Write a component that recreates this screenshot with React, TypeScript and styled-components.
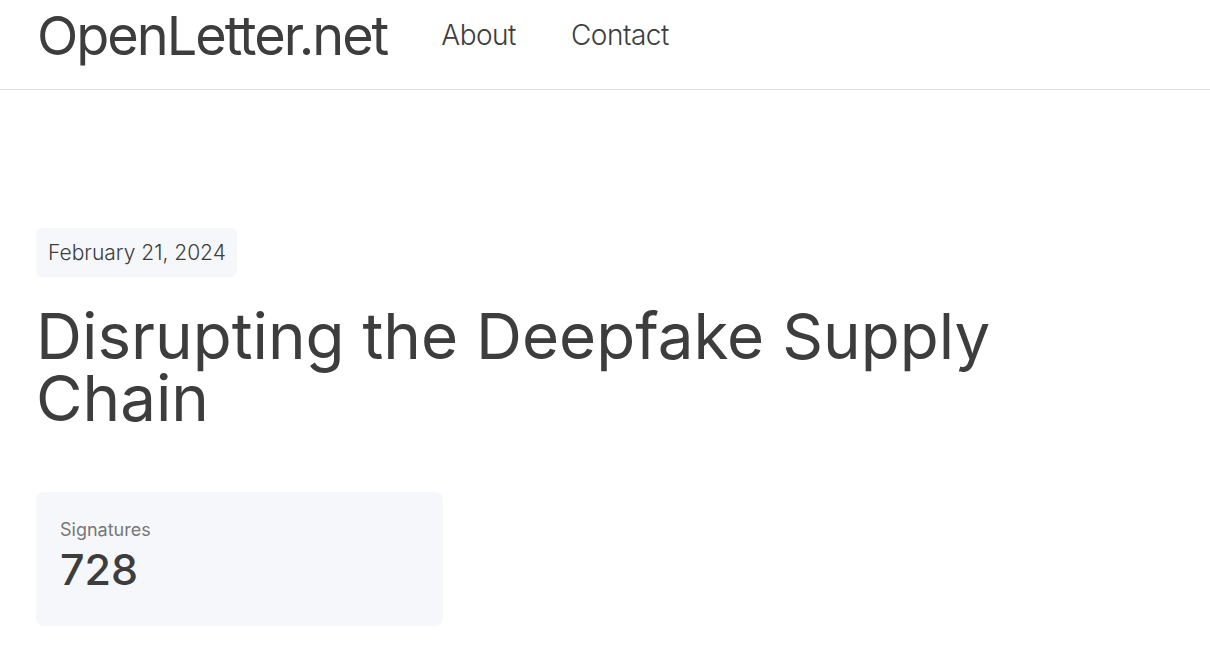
import React from "react";
import styled, { createGlobalStyle } from "styled-components";

const Global = createGlobalStyle`
  html, body { margin: 0; padding: 0; background: #fff; }
  body { font-family: Inter, "Noto Sans", sans-serif; color: #3d3d3d; }
  * { box-sizing: border-box; }
`;

const Header = styled.header`
  display: flex;
  align-items: center;
  height: 90px;
  padding: 0 37px;
  border-bottom: 1px solid #dddddd;
  gap: 54px;
`;

const Logo = styled.a`
  font-size: 54px;
  font-weight: 400;
  letter-spacing: -2px;
  color: #3d3d3d;
  text-decoration: none;
  line-height: 1;
  margin-top: -18px;
`;

const Nav = styled.nav`
  display: flex;
  gap: 55px;
  margin-top: -20px;
`;

const NavLink = styled.a`
  font-size: 28px;
  font-weight: 300;
  letter-spacing: -0.5px;
  color: #3d3d3d;
  text-decoration: none;
`;

const Main = styled.main`
  padding: 138px 36px 0;
  display: flex;
  flex-direction: column;
  align-items: flex-start;
`;

const DateBadge = styled.div`
  background: #f6f7fb;
  border-radius: 6px;
  padding: 11px 11px 11px 12px;
  font-size: 21px;
  font-weight: 300;
  line-height: 27px;
`;

const Title = styled.h1`
  margin: 28px 0 0;
  font-size: 63.7px;
  font-weight: 400;
  line-height: 62px;
  max-width: 1000px;
`;

const Card = styled.div`
  margin-top: 63px;
  width: 407px;
  height: 134px;
  background: #f6f7fb;
  border-radius: 8px;
  padding: 27px 24px;
`;

const Label = styled.div`
  font-size: 18px;
  color: #777;
  font-weight: 400;
`;

const Count = styled.div`
  font-size: 43px;
  font-weight: 550;
  margin-top: 3px;
`;

export default function App() {
  return (
    <>
      <Global />
      <Header>
        <Logo href="#">OpenLetter.net</Logo>
        <Nav>
          <NavLink href="#">About</NavLink>
          <NavLink href="#">Contact</NavLink>
        </Nav>
      </Header>
      <Main>
        <DateBadge>February 21, 2024</DateBadge>
        <Title>Disrupting the Deepfake Supply Chain</Title>
        <Card>
          <Label>Signatures</Label>
          <Count>728</Count>
        </Card>
      </Main>
    </>
  );
}
